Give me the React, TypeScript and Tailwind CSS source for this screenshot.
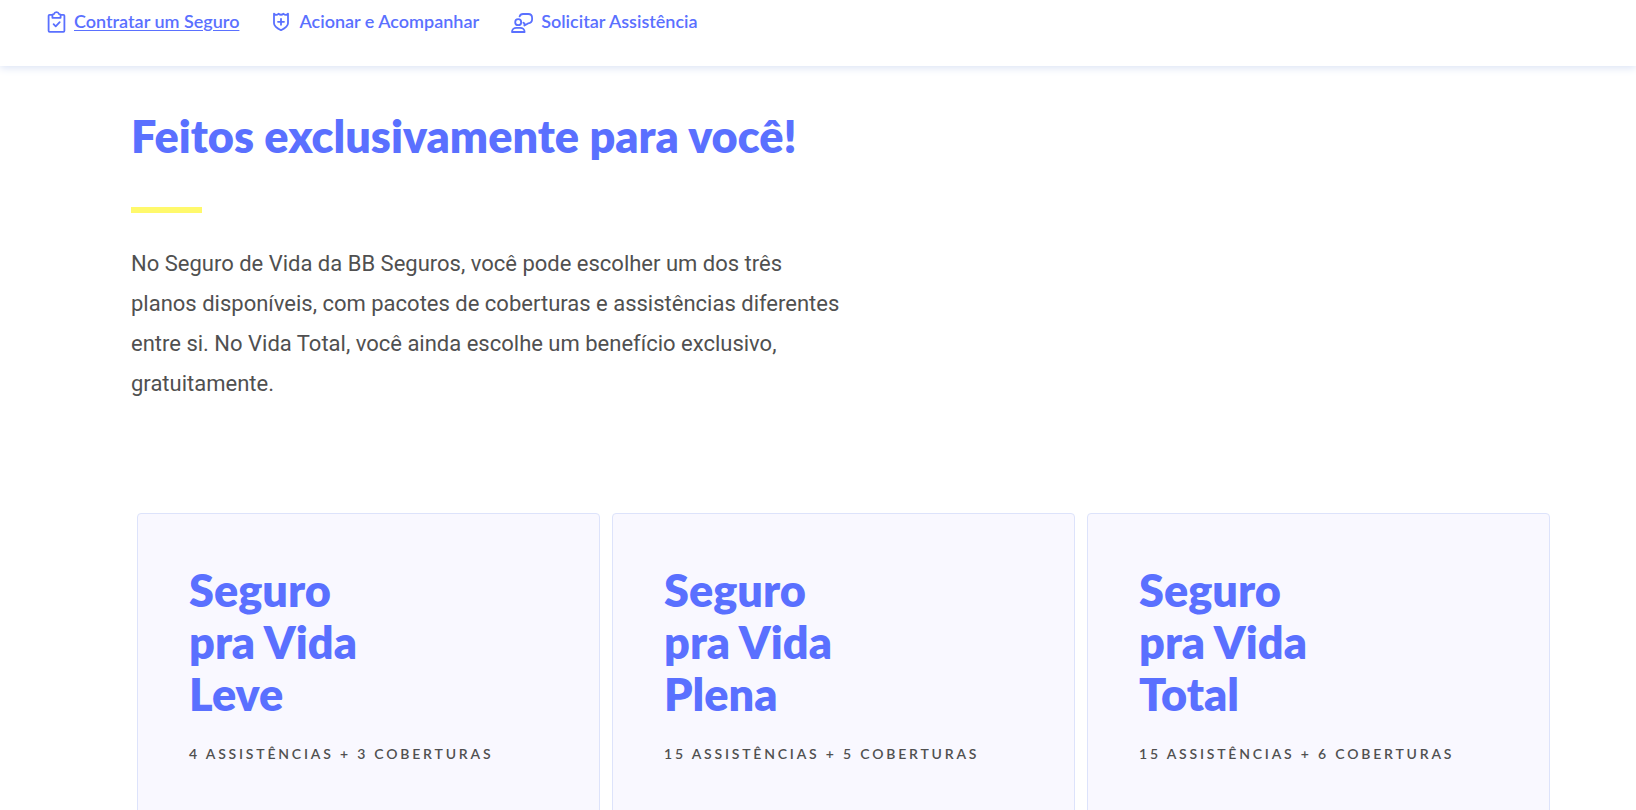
import type { ReactNode } from 'react';

type NavItem = { label: string; icon: ReactNode; active?: boolean };
type Plan = { name: string; summary: string };

function ClipboardIcon() {
  return (
    <svg
      className="h-6 w-5 shrink-0"
      viewBox="0 0 20 24"
      fill="none"
      stroke="currentColor"
      strokeWidth="1.8"
      strokeLinecap="round"
      strokeLinejoin="round"
      aria-hidden="true"
    >
      <path d="M6 5.800H3.600A1 1 0 0 0 2.600 6.800v15a1 1 0 0 0 1 1h13.800a1 1 0 0 0 1-1v-15a1 1 0 0 0-1-1H15" />
      <path d="M6.400 8.800V6.500A1.400 1.400 0 0 1 7.800 5.100h.2a2.600 2.600 0 0 1 5 0h.2a1.400 1.400 0 0 1 1.400 1.400v2.300z" />
      <path d="M7.600 15.200 9.700 17.300l4-4.200" />
    </svg>
  );
}

function ShieldIcon() {
  return (
    <svg
      className="h-6 w-5 shrink-0"
      viewBox="0 0 20 24"
      fill="none"
      stroke="currentColor"
      strokeWidth="1.8"
      strokeLinecap="round"
      strokeLinejoin="round"
      aria-hidden="true"
    >
      <path d="M3 4.600q2.100 2.400 4.500.2 2.500 2 5 0 2.400 2.200 4.500-.2v9.600c0 3.300-3.400 5.200-7 7-3.600-1.800-7-3.700-7-7z" />
      <path d="M10 9.800v6M7 12.800h6" />
    </svg>
  );
}

function SupportIcon() {
  return (
    <svg
      className="h-6 w-[22px] shrink-0"
      viewBox="0 0 22 24"
      fill="none"
      stroke="currentColor"
      strokeWidth="1.8"
      strokeLinecap="round"
      strokeLinejoin="round"
      aria-hidden="true"
    >
      <circle cx="7.200" cy="13.200" r="3" />
      <path d="M1 23c0-2.600 2-4.200 4.400-4.200h3.800c2.400 0 4.400 1.600 4.400 4.200z" />
      <path d="M8.600 7.400C9.100 5.800 10.300 5 12 5h5.200c2.300 0 3.900 1.600 3.900 3.900v1.300c0 2.800-1.700 3.900-4.100 4.200l-3.600 2.200.1-2.200-1.100-.7" />
    </svg>
  );
}

const navItems: NavItem[] = [
  { label: 'Contratar um Seguro', icon: <ClipboardIcon />, active: true },
  { label: 'Acionar e Acompanhar', icon: <ShieldIcon /> },
  { label: 'Solicitar Assistência', icon: <SupportIcon /> },
];

const plans: Plan[] = [
  { name: 'Leve', summary: '4 assistências + 3 coberturas' },
  { name: 'Plena', summary: '15 assistências + 5 coberturas' },
  { name: 'Total', summary: '15 assistências + 6 coberturas' },
];

function TopNav() {
  return (
    <header className="h-[66px] bg-white px-[46px] pt-[7px] shadow-[0_2px_8px_#dbe3f5]">
      <nav className="flex gap-8">
        {navItems.map((item) => (
          <a
            key={item.label}
            href="#"
            className="flex items-center gap-2 text-[18px] leading-7 font-semibold text-[#5a70ff]"
          >
            {item.icon}
            <span className={item.active ? 'underline underline-offset-2' : ''}>{item.label}</span>
          </a>
        ))}
      </nav>
    </header>
  );
}

function PlanCard({ plan }: { plan: Plan }) {
  return (
    <article className="min-h-[480px] rounded-[4px] border border-[#dde3fb] bg-[#f9f8ff] px-[51px] pt-[50px]">
      <h3 className="text-[45px] leading-[52px] font-extrabold text-[#5a70ff]">
        Seguro
        <br />
        pra Vida
        <br />
        {plan.name}
      </h3>
      <p className="mt-[22px] text-[14px] leading-6 font-semibold tracking-[0.2em] text-[#505050] uppercase">
        {plan.summary}
      </p>
    </article>
  );
}

export default function App() {
  return (
    <div className="h-screen overflow-hidden bg-white font-[Lato,sans-serif]">
      <TopNav />
      <main className="pt-11 pr-20 pl-[131px]">
        <h2 className="text-[45px] leading-[52px] font-extrabold text-[#5a70ff]">
          Feitos exclusivamente para você!
        </h2>
        <div className="mt-[45px] h-1.5 w-[71px] bg-[#fff96b]" />
        <p className="mt-[31px] max-w-[720px] font-[Roboto,sans-serif] text-[22px] leading-10 font-normal text-[#505050]">
          No Seguro de Vida da BB Seguros, você pode escolher um dos três planos disponíveis, com
          pacotes de coberturas e assistências diferentes entre si. No Vida Total, você ainda escolhe
          um benefício exclusivo, gratuitamente.
        </p>
        <section className="mt-[109px] grid grid-cols-3 gap-3 px-1.5">
          {plans.map((plan) => (
            <PlanCard key={plan.name} plan={plan} />
          ))}
        </section>
      </main>
    </div>
  );
}
